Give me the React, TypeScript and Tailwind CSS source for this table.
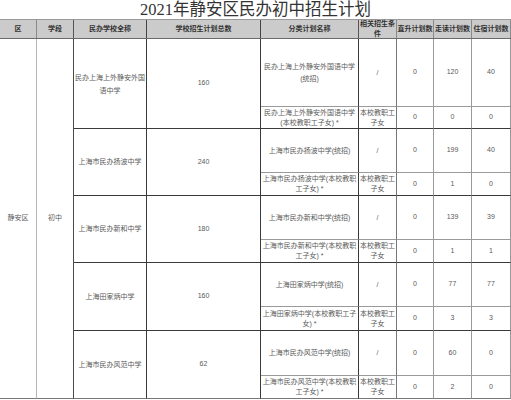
import React from "react";

type Sub = { name: string; cond: string; a: string; b: string; c: string; h: string; bb: string; lead: string };
type Block = { school: string; total: string; lead: string; subs: Sub[] };

const blocks: Block[] = [
  {
    school: "民办上海上外静安外国语中学",
    total: "160",
    lead: "leading-[13px]",
    subs: [
      { name: "民办上海上外静安外国语中学(统招)", cond: "/", a: "0", b: "120", c: "40", h: "h-[68px]", bb: "border-b-[#9a9a9a]", lead: "leading-[12px]" },
      { name: "民办上海上外静安外国语中学(本校教职工子女) *", cond: "本校教职工子女", a: "0", b: "0", c: "0", h: "h-[22px]", bb: "border-b-[#3a3a3a]", lead: "leading-[10px]" },
    ],
  },
  {
    school: "上海市民办扬波中学",
    total: "240",
    lead: "leading-[12px]",
    subs: [
      { name: "上海市民办扬波中学(统招)", cond: "/", a: "0", b: "199", c: "40", h: "h-[44px]", bb: "border-b-[#9a9a9a]", lead: "leading-[10px]" },
      { name: "上海市民办扬波中学(本校教职工子女) *", cond: "本校教职工子女", a: "0", b: "1", c: "0", h: "h-[23px]", bb: "border-b-[#3a3a3a]", lead: "leading-[10px]" },
    ],
  },
  {
    school: "上海市民办新和中学",
    total: "180",
    lead: "leading-[12px]",
    subs: [
      { name: "上海市民办新和中学(统招)", cond: "/", a: "0", b: "139", c: "39", h: "h-[44px]", bb: "border-b-[#9a9a9a]", lead: "leading-[10px]" },
      { name: "上海市民办新和中学(本校教职工子女) *", cond: "本校教职工子女", a: "0", b: "1", c: "1", h: "h-[23px]", bb: "border-b-[#3a3a3a]", lead: "leading-[10px]" },
    ],
  },
  {
    school: "上海田家炳中学",
    total: "160",
    lead: "leading-[12px]",
    subs: [
      { name: "上海田家炳中学(统招)", cond: "/", a: "0", b: "77", c: "77", h: "h-[44px]", bb: "border-b-[#9a9a9a]", lead: "leading-[10px]" },
      { name: "上海田家炳中学(本校教职工子女) *", cond: "本校教职工子女", a: "0", b: "3", c: "3", h: "h-[24px]", bb: "border-b-[#3a3a3a]", lead: "leading-[10px]" },
    ],
  },
  {
    school: "上海市民办风范中学",
    total: "62",
    lead: "leading-[12px]",
    subs: [
      { name: "上海市民办风范中学(统招)", cond: "/", a: "0", b: "60", c: "0", h: "h-[45px]", bb: "border-b-[#9a9a9a]", lead: "leading-[10px]" },
      { name: "上海市民办风范中学(本校教职工子女) *", cond: "本校教职工子女", a: "0", b: "2", c: "0", h: "h-[23px]", bb: "border-b-[#777]", lead: "leading-[10px]" },
    ],
  },
];

function H({ w, children, r = "border-r-[#8a8a8a]" }: { w: string; children: React.ReactNode; r?: string }) {
  return (
    <div className={`${w} h-full flex items-center justify-center text-center border-r ${r} leading-[10px]`}>
      {children}
    </div>
  );
}

export default function App() {
  return (
    <div className="w-[511px] h-[400px] bg-white overflow-hidden font-['Liberation_Sans','Noto_Sans_CJK_SC',sans-serif] text-[7px] text-[#5a5a5a]">
      <div className="h-[19px] text-center text-[16.5px] leading-[19px] text-[#333] font-['Liberation_Serif','Noto_Sans_CJK_SC',serif]">
        2021年静安区民办初中招生计划
      </div>
      <div className="h-[20px] flex bg-[#cbcbcb] border-t border-t-[#9a9a9a] border-b border-b-[#6a6a6a] font-bold text-[#333]">
        <H w="w-[37px]">区</H>
        <H w="w-[37px]" r="border-r-[#555]">学段</H>
        <H w="w-[73px]" r="border-r-[#444]">民办学校全称</H>
        <H w="w-[114px]" r="border-r-[#444]">学校招生计划总数</H>
        <H w="w-[98px]" r="border-r-[#555]">分类计划名称</H>
        <H w="w-[38px]">相关招生条件</H>
        <H w="w-[37px]">直升计划数</H>
        <H w="w-[38px]">走读计划数</H>
        <H w="w-[39px]">住宿计划数</H>
      </div>
      <div className="flex">
        <div className="w-[37px] h-[360px] flex items-center justify-center border-r border-r-[#b5b5b5] border-b border-b-[#777]">
          静安区
        </div>
        <div className="w-[37px] h-[360px] flex items-center justify-center border-r border-r-[#4a4a4a] border-b border-b-[#777]">
          初中
        </div>
        <div className="flex flex-col">
          {blocks.map((bl, i) => (
            <div key={i} className="flex">
              <div
                className={`w-[73px] flex items-center justify-center text-center px-px border-r border-r-[#3a3a3a] border-b ${
                  i === blocks.length - 1 ? "border-b-[#777]" : "border-b-[#3a3a3a]"
                } ${bl.lead}`}
              >
                {bl.school}
              </div>
              <div
                className={`w-[114px] flex items-center justify-center border-r border-r-[#3a3a3a] border-b ${
                  i === blocks.length - 1 ? "border-b-[#777]" : "border-b-[#3a3a3a]"
                }`}
              >
                {bl.total}
              </div>
              <div className="flex flex-col">
                {bl.subs.map((s, j) => (
                  <div key={j} className={`flex ${s.h}`}>
                    <div className={`w-[98px] h-full flex items-center justify-center text-center px-px border-r border-r-[#3a3a3a] border-b ${s.bb} ${s.lead}`}>
                      {s.name}
                    </div>
                    <div className={`w-[38px] h-full flex items-center justify-center text-center border-r border-r-[#777] border-b ${s.bb} leading-[10px]`}>
                      {s.cond}
                    </div>
                    <div className={`w-[37px] h-full flex items-center justify-center border-r border-r-[#999] border-b ${s.bb}`}>
                      {s.a}
                    </div>
                    <div className={`w-[38px] h-full flex items-center justify-center border-r border-r-[#999] border-b ${s.bb}`}>
                      {s.b}
                    </div>
                    <div className={`w-[39px] h-full flex items-center justify-center border-r border-r-[#999] border-b ${s.bb}`}>
                      {s.c}
                    </div>
                  </div>
                ))}
              </div>
            </div>
          ))}
        </div>
      </div>
    </div>
  );
}
